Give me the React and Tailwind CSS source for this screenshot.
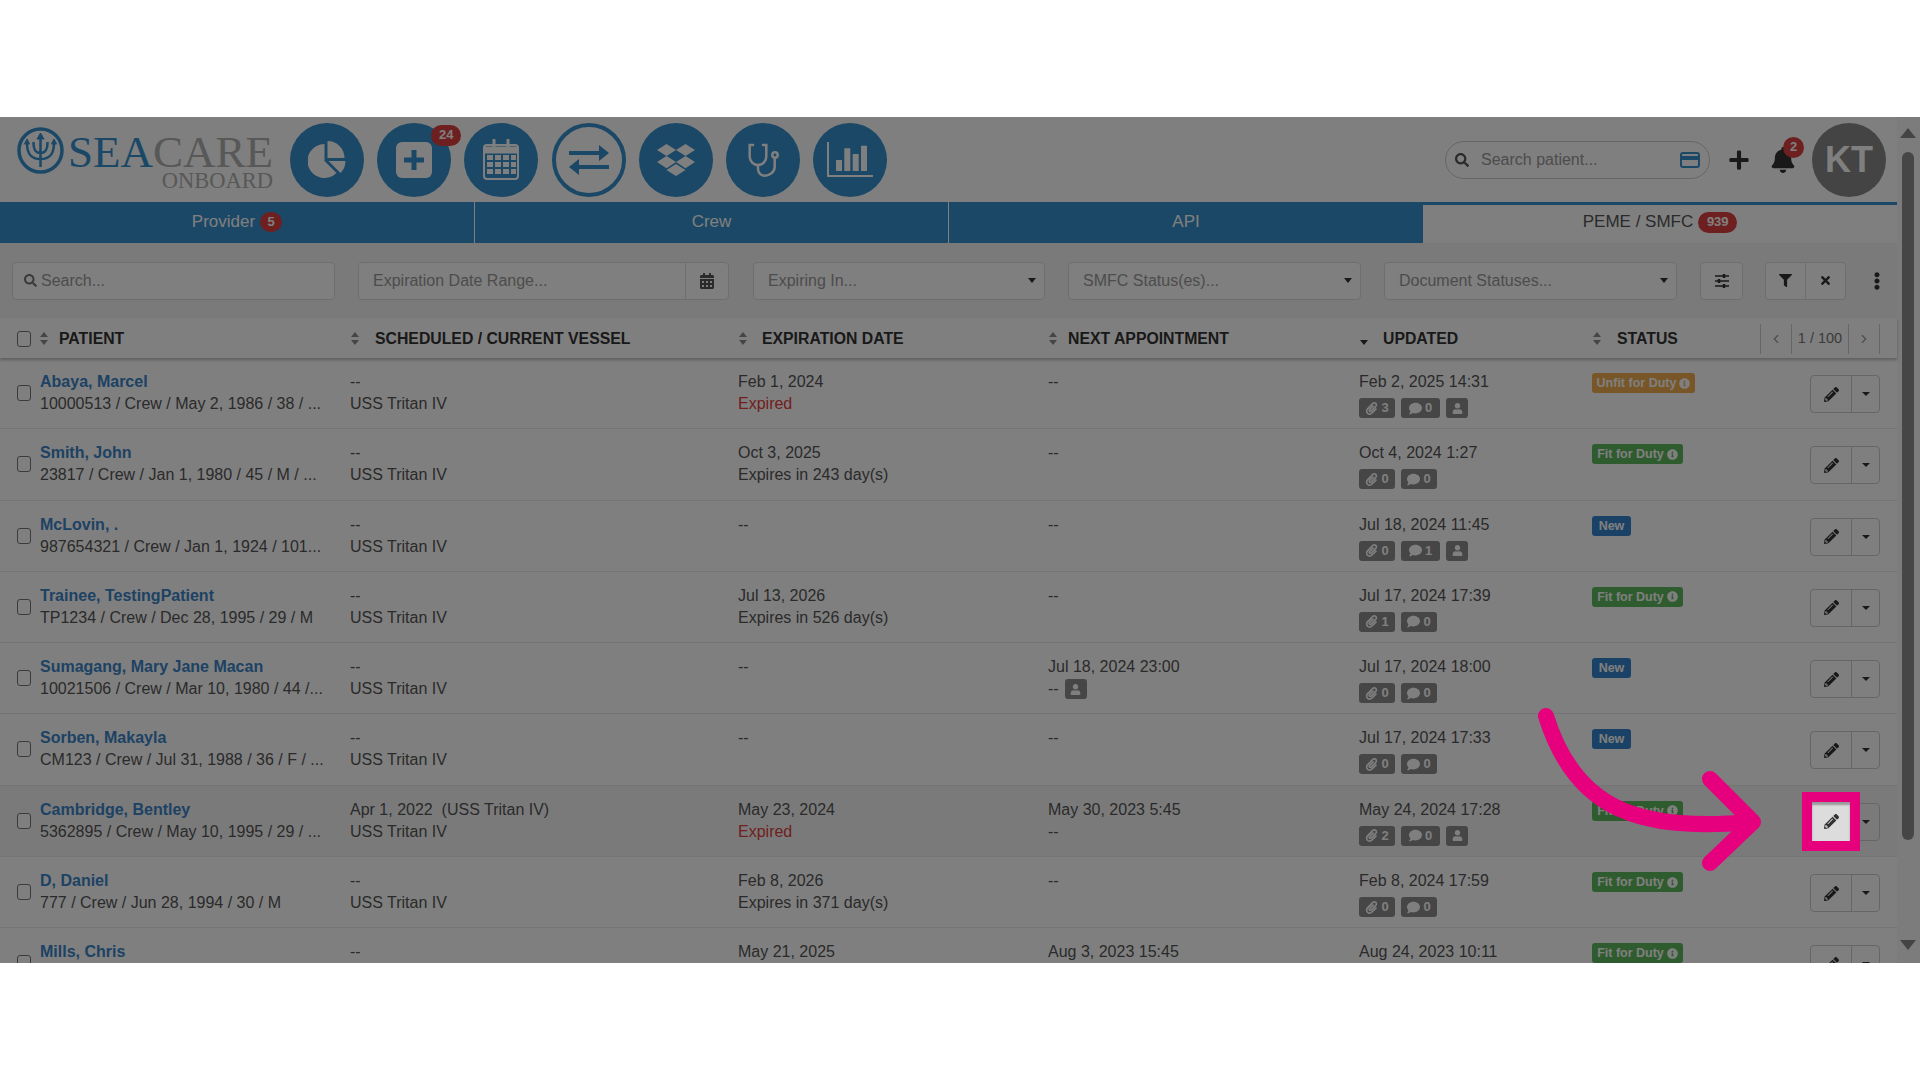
import { ChevronLeft, ChevronRight } from "lucide-react";
import {
	FaBell,
	FaCalendarAlt,
	FaComment,
	FaDropbox,
	FaEllipsisV,
	FaFilter,
	FaInfoCircle,
	FaPaperclip,
	FaPencilAlt,
	FaPlus,
	FaSearch,
	FaTimes,
	FaUser,
} from "react-icons/fa";

const rows = [
	{ name: "Abaya, Marcel", info: "10000513 / Crew / May 2, 1986 / 38 / ...", v1: "--", exp: "Feb 1, 2024", exp2: "Expired", expired: true, next: "--", updated: "Feb 2, 2025 14:31", clips: 3, comments: 0, user: true, status: "unfit" },
	{ name: "Smith, John", info: "23817 / Crew / Jan 1, 1980 / 45 / M / ...", v1: "--", exp: "Oct 3, 2025", exp2: "Expires in 243 day(s)", next: "--", updated: "Oct 4, 2024 1:27", clips: 0, comments: 0, status: "fit" },
	{ name: "McLovin, .", info: "987654321 / Crew / Jan 1, 1924 / 101...", v1: "--", exp: "--", next: "--", updated: "Jul 18, 2024 11:45", clips: 0, comments: 1, user: true, status: "new" },
	{ name: "Trainee, TestingPatient", info: "TP1234 / Crew / Dec 28, 1995 / 29 / M", v1: "--", exp: "Jul 13, 2026", exp2: "Expires in 526 day(s)", next: "--", updated: "Jul 17, 2024 17:39", clips: 1, comments: 0, status: "fit" },
	{ name: "Sumagang, Mary Jane Macan", info: "10021506 / Crew / Mar 10, 1980 / 44 /...", v1: "--", exp: "--", next: "Jul 18, 2024 23:00", nextUser: true, updated: "Jul 17, 2024 18:00", clips: 0, comments: 0, status: "new" },
	{ name: "Sorben, Makayla", info: "CM123 / Crew / Jul 31, 1988 / 36 / F / ...", v1: "--", exp: "--", next: "--", updated: "Jul 17, 2024 17:33", clips: 0, comments: 0, status: "new" },
	{ name: "Cambridge, Bentley", info: "5362895 / Crew / May 10, 1995 / 29 / ...", v1: "Apr 1, 2022\u00a0\u00a0(USS Tritan IV)", exp: "May 23, 2024", exp2: "Expired", expired: true, next: "May 30, 2023 5:45", next2: "--", updated: "May 24, 2024 17:28", clips: 2, comments: 0, user: true, status: "fit", hover: true },
	{ name: "D, Daniel", info: "777 / Crew / Jun 28, 1994 / 30 / M", v1: "--", exp: "Feb 8, 2026", exp2: "Expires in 371 day(s)", next: "--", updated: "Feb 8, 2024 17:59", clips: 0, comments: 0, status: "fit" },
	{ name: "Mills, Chris", info: "", v1: "--", exp: "May 21, 2025", next: "Aug 3, 2023 15:45", updated: "Aug 24, 2023 10:11", clips: 0, comments: 0, status: "fit" },
];

function Sort({ down }) {
	return (
		<svg width="10" height="16" viewBox="0 0 10 16" className="shrink-0">
			{!down && <path d="M5 1 9 6H1z" fill="#8a8a8a" />}
			<path d="M5 14 9 9H1z" fill={down ? "#333" : "#8a8a8a"} />
		</svg>
	);
}

function Check() {
	return <span className="block w-[14px] h-[16px] shrink-0 rounded-[3px] border border-[#777] bg-white" />;
}

function CircleBtn({ children, outline }) {
	return (
		<div
			className={`relative w-[74px] h-[74px] rounded-full flex items-center justify-center shrink-0 ${
				outline ? "border-[4px] border-[#3590cc] bg-white text-[#3590cc]" : "bg-[#3590cc] text-white"
			}`}
		>
			{children}
		</div>
	);
}

function Select({ label, className }) {
	return (
		<div className={`h-[38px] bg-white border border-[#ddd] rounded-[4px] flex items-center justify-between pl-[14px] pr-[8px] text-[16px] text-[#999] ${className}`}>
			{label}
			<span className="w-0 h-0 border-x-[4px] border-x-transparent border-t-[5px] border-t-[#333]" />
		</div>
	);
}

function Status({ type }) {
	if (type === "new") {
		return <span className="inline-flex w-[39px] h-[20px] items-center justify-center rounded-[3px] bg-[#3584cc] text-white text-[12.5px] font-bold">New</span>;
	}
	const unfit = type === "unfit";
	return (
		<span className={`inline-flex h-[20px] items-center justify-center gap-[3px] rounded-[3px] text-white text-[12.5px] font-bold ${unfit ? "w-[103px] bg-[#f0ad4e]" : "w-[91px] bg-[#5cb85c]"}`}>
			{unfit ? "Unfit for Duty" : "Fit for Duty"}
			<FaInfoCircle className="w-[11px] h-[11px]" />
		</span>
	);
}

function Tag({ children, className }) {
	return <span className={`inline-flex h-[20px] items-center justify-center gap-[3px] rounded-[3px] bg-[#8c8c8c] text-white text-[13px] font-bold ${className}`}>{children}</span>;
}

function Row({ row }) {
	return (
		<div className={`grid grid-cols-[350px_388px_310px_311px_233px_218px_1fr] h-[71.3px] pt-[13px] border-b border-[#e8e8e8] text-[16px] leading-[22px] text-[#555] shrink-0 ${row.hover ? "bg-[#f5f5f5]" : ""}`}>
			<div className="flex pl-[17px] gap-[9px]">
				<div className="pt-[14px]">
					<Check />
				</div>
				<div className="whitespace-nowrap">
					<div className="font-bold text-[#3a84c8]">{row.name}</div>
					<div>{row.info}</div>
				</div>
			</div>
			<div>
				<div>{row.v1}</div>
				<div>USS Tritan IV</div>
			</div>
			<div>
				<div>{row.exp}</div>
				{row.exp2 && <div className={row.expired ? "text-[#e04040]" : ""}>{row.exp2}</div>}
			</div>
			<div>
				<div>{row.next}</div>
				{row.next2 && <div>{row.next2}</div>}
				{row.nextUser && (
					<div className="flex items-center gap-[6px]">
						--
						<Tag className="w-[22px]">
							<FaUser className="w-[11px] h-[11px]" />
						</Tag>
					</div>
				)}
			</div>
			<div>
				<div>{row.updated}</div>
				<div className="flex gap-[6px] mt-[5px]">
					<Tag className="w-[36px]">
						<FaPaperclip className="w-[13px] h-[13px]" />
						{row.clips}
					</Tag>
					<Tag className={row.user ? "w-[39px]" : "w-[36px]"}>
						<FaComment className="w-[13px] h-[13px]" />
						{row.comments}
					</Tag>
					{row.user && (
						<Tag className="w-[22px]">
							<FaUser className="w-[11px] h-[11px]" />
						</Tag>
					)}
				</div>
			</div>
			<div>
				<Status type={row.status} />
			</div>
			<div className="flex pt-[4px]">
				<div className="w-[70px] h-[38px] flex border border-[#ccc] rounded-[4px] text-[#333]">
					<div className="w-[41px] border-r border-[#ccc] flex items-center justify-center">
						<FaPencilAlt className="w-[15px] h-[15px]" />
					</div>
					<div className="flex-1 flex items-center justify-center">
						<span className="w-0 h-0 border-x-[4px] border-x-transparent border-t-[4px] border-t-[#333]" />
					</div>
				</div>
			</div>
		</div>
	);
}

export default function App() {
	return (
		<div className="min-h-screen bg-white pt-[117px] font-['Liberation_Sans',Arial,sans-serif]">
			<div className="relative h-[846px] overflow-hidden bg-white flex">
				<div className="w-[1897px] flex flex-col shrink-0">
					{/* top bar */}
					<div className="h-[85px] flex items-center pl-[17px] pr-[11px] shrink-0">
						<div className="w-[273px] flex items-center shrink-0 mt-[2px]">
							<svg width="47" height="47" viewBox="0 0 47 47" fill="none" stroke="#3590cc" className="shrink-0 -mt-[20px]">
								<circle cx="23.5" cy="23.5" r="21.5" strokeWidth="3.5" />
								<path d="M23.5 8v32M10 16c0 12 5 16 13.500 16S37 28 37 16M16.500 15c0 8 2 11 7 11s7-3 7-11" strokeWidth="2.500" />
								<path d="M23.500 6l-3.500 6h7zM10 12l-2.500 5h5zM37 12l-2.500 5h5z" fill="#3590cc" strokeWidth="1" />
							</svg>
							<div className="ml-[4px] flex flex-col items-end font-['Liberation_Serif',serif] text-[#b0b0b0]">
								<div className="mt-[3px] text-[45px] leading-[36px] whitespace-nowrap">
									<span className="text-[#3590cc]">SEA</span>CARE
								</div>
								<div className="text-[22.5px] leading-[21px] whitespace-nowrap">ONBOARD</div>
							</div>
						</div>
						<div className="flex gap-[13.2px] items-center">
							<CircleBtn>
								<svg width="38" height="40" viewBox="0 -2 38 40" fill="currentColor">
									<path d="M16.500 2A17 17 0 1 0 28.500 31L16.500 19z" />
									<path d="M19.500-1A17 17 0 0 1 36.500 16H19.500z" />
									<path d="M20.500 19h17a17 17 0 0 1-5 12z" />
								</svg>
							</CircleBtn>
							<CircleBtn>
								<svg width="36" height="36" viewBox="0 0 36 36">
									<rect width="36" height="36" rx="6" fill="currentColor" />
									<path d="M18 8v20M8 18h20" stroke="#3590cc" strokeWidth="5" />
								</svg>
								<span className="absolute top-[2px] right-[-10px] w-[30px] h-[21px] rounded-full bg-[#dc4040] text-white text-[13px] font-bold flex items-center justify-center">24</span>
							</CircleBtn>
							<CircleBtn>
								<svg width="38" height="42" viewBox="0 0 38 42" fill="none" stroke="currentColor">
									<rect x="2" y="6" width="34" height="34" rx="3" strokeWidth="2" />
									<path d="M2 8h34v6H2z" fill="currentColor" />
									<path d="M12 1v9M26 1v9" strokeWidth="3" strokeLinecap="round" />
									<path d="M5 16h6v5H5zM13 16h6v5h-6zM21 16h6v5h-6zM29 16h5v5h-5zM5 23h6v5H5zM13 23h6v5h-6zM21 23h6v5h-6zM29 23h5v5h-5zM5 30h6v5H5zM13 30h6v5h-6zM21 30h6v5h-6zM29 30h5v5h-5z" fill="currentColor" stroke="none" />
								</svg>
							</CircleBtn>
							<CircleBtn outline>
								<svg width="40" height="30" viewBox="0 0 40 30" fill="currentColor">
									<path d="M0 6h30V0l10 8-10 8v-6H0zM40 20H10v-6L0 22l10 8v-6h30z" />
								</svg>
							</CircleBtn>
							<CircleBtn>
								<FaDropbox className="w-[38px] h-[38px]" />
							</CircleBtn>
							<CircleBtn>
								<svg width="36" height="36" viewBox="0 0 36 36" fill="none" stroke="currentColor" strokeWidth="2.500" strokeLinecap="round">
									<path d="M8 3H4.700V14.700a8.300 8.300 0 0 0 16.600 0V3H18" />
									<path d="M13 23v4c0 4 3 6.700 6.700 6.700s10-3 10-9V16" />
									<circle cx="30" cy="13" r="2.700" />
								</svg>
							</CircleBtn>
							<CircleBtn>
								<svg width="46" height="36" viewBox="0 0 46 36" fill="none" stroke="currentColor">
									<path d="M1 0v34h45" strokeWidth="2" />
									<path d="M9 18h6v11H9zM17.300 6.300h6V29h-6zM25.700 12h6v17h-6zM34 3.700h6V29h-6z" fill="currentColor" stroke="none" />
								</svg>
							</CircleBtn>
						</div>
						<div className="ml-auto flex items-center">
							<div className="w-[265px] h-[38px] rounded-full border border-[#ccc] flex items-center px-[9px] text-[16px] text-[#999]">
								<FaSearch className="w-[14px] h-[14px] text-[#555]" />
								<span className="ml-[12px]">Search patient...</span>
								<svg width="20" height="16" viewBox="0 0 20 16" className="ml-auto">
									<rect x="1" y="1" width="18" height="14" rx="2" fill="none" stroke="#3590cc" strokeWidth="2" />
									<rect x="1" y="4" width="18" height="4" fill="#3590cc" />
								</svg>
							</div>
							<FaPlus className="ml-[18px] w-[22px] h-[22px] text-[#333]" />
							<div className="relative ml-[20px]">
								<FaBell className="w-[26px] h-[26px] text-[#333]" />
								<span className="absolute -top-[10px] left-[13px] w-[21px] h-[21px] rounded-full bg-[#dc4040] text-white text-[13px] font-bold flex items-center justify-center">2</span>
							</div>
							<div className="ml-[16px] w-[74px] h-[74px] rounded-full bg-[#888] text-white text-[36px] font-bold flex items-center justify-center">KT</div>
						</div>
					</div>
					{/* tabs */}
					<div className="h-[41px] grid grid-cols-[475px_474px_474px_1fr] bg-[#3590cc] text-white text-[17px] shrink-0">
						<div className="flex items-center justify-center gap-[5px] border-r border-white pb-[2px]">
							Provider
							<span className="w-[22px] h-[20px] rounded-full bg-[#dc4040] text-[13px] font-bold flex items-center justify-center">5</span>
						</div>
						<div className="flex items-center justify-center border-r border-white pb-[2px]">Crew</div>
						<div className="flex items-center justify-center pb-[2px]">API</div>
						<div className="mt-[3px] pb-[4px] bg-white text-[#555] flex items-center justify-center gap-[5px]">
							PEME / SMFC
							<span className="w-[39px] h-[21px] rounded-full bg-[#dc4040] text-white text-[13px] font-bold flex items-center justify-center">939</span>
						</div>
					</div>
					{/* filters */}
					<div className="h-[75px] bg-[#f5f5f5] flex items-center pl-[12px] shrink-0">
						<div className="w-[323px] h-[38px] bg-white border border-[#ddd] rounded-[4px] flex items-center pl-[11px] text-[16px] text-[#999]">
							<FaSearch className="w-[13px] h-[13px] mr-[4px] text-[#777]" />
							Search...
						</div>
						<div className="ml-[23px] w-[371px] h-[38px] bg-white border border-[#ddd] rounded-[4px] flex items-center text-[16px] text-[#999]">
							<span className="flex-1 pl-[14px]">Expiration Date Range...</span>
							<span className="w-[43px] h-full border-l border-[#ddd] flex items-center justify-center">
								<FaCalendarAlt className="w-[14px] h-[16px] text-[#555]" />
							</span>
						</div>
						<Select label="Expiring In..." className="ml-[24px] w-[292px]" />
						<Select label="SMFC Status(es)..." className="ml-[23px] w-[293px]" />
						<Select label="Document Statuses..." className="ml-[23px] w-[293px]" />
						<div className="ml-[23px] w-[43px] h-[38px] bg-white border border-[#ddd] rounded-[4px] flex items-center justify-center">
							<svg width="14" height="16" viewBox="0 0 14 16" stroke="#333" strokeWidth="1.500">
								<path d="M0 3h14M0 8h14M0 13h14" />
								<path d="M9 1v4M4 6v4M9 11v4" strokeWidth="2.500" />
							</svg>
						</div>
						<div className="ml-[22px] w-[81px] h-[38px] bg-white border border-[#ddd] rounded-[4px] flex">
							<span className="w-[40px] border-r border-[#ddd] flex items-center justify-center">
								<FaFilter className="w-[13px] h-[13px] text-[#333]" />
							</span>
							<span className="flex-1 flex items-center justify-center">
								<FaTimes className="w-[13px] h-[13px] text-[#333]" />
							</span>
						</div>
						<FaEllipsisV className="ml-[23px] w-[16px] h-[18px] text-[#333]" />
					</div>
					{/* table head */}
					<div className="relative grid grid-cols-[350px_388px_310px_311px_233px_168px_1fr] h-[40px] items-center shadow-[0_2px_3px_#bbb] pt-[2px] text-[15.8px] font-bold text-[#333] uppercase shrink-0">
						<div className="flex items-center pl-[17px]">
							<Check />
							<span className="ml-[8px]"><Sort /></span>
							<span className="ml-[10px]">Patient</span>
						</div>
						<div className="flex items-center gap-[15px]"><Sort />Scheduled / Current Vessel</div>
						<div className="flex items-center gap-[14px]"><Sort />Expiration Date</div>
						<div className="flex items-center gap-[10px]"><Sort />Next Appointment</div>
						<div className="flex items-center gap-[14px]"><Sort down />Updated</div>
						<div className="flex items-center gap-[15px]"><Sort />Status</div>
						<div className="flex w-[120px] h-[30px] font-normal normal-case text-[14.5px] text-[#999] border-r border-[#ccc]">
							<span className="w-[32px] border-x border-[#ccc] flex items-center justify-center"><ChevronLeft className="w-[14px] h-[14px]" /></span>
							<span className="w-[56px] flex items-center justify-center text-[#777]">1 / 100</span>
							<span className="flex-1 border-l border-[#ccc] flex items-center justify-center"><ChevronRight className="w-[14px] h-[14px]" /></span>
						</div>
					</div>
					{rows.map(row => (
						<Row key={row.name} row={row} />
					))}
				</div>
				{/* scrollbar */}
				<div className="flex-1 bg-[#f8f8f8] flex flex-col items-center pt-[11px] pr-[2px]">
					<span className="w-0 h-0 border-x-[8px] border-x-transparent border-b-[10px] border-b-[#888]" />
					<span className="mt-[14px] w-[12px] h-[688px] rounded-full bg-[#8c8c8c]" />
					<span className="mt-[100px] w-0 h-0 border-x-[8px] border-x-transparent border-t-[10px] border-t-[#888]" />
				</div>
				{/* page dimming and the callout on top of it */}
				<div className="absolute inset-0 bg-black/50" />
				<div className="absolute left-[1802px] top-[675px] w-[58px] h-[59px] border-[10px] border-[#e6007e] bg-[#dcdcdc] shadow-[inset_0_3px_2px_#999] flex items-center justify-center text-[#333]">
					<FaPencilAlt className="w-[15px] h-[15px]" />
				</div>
				<svg className="absolute left-0 top-0" width="1897" height="846" fill="none" stroke="#e6007e" strokeWidth="16" strokeLinecap="round" strokeLinejoin="round">
					<path d="M1546 599C1575 693 1640 715 1750 705M1710 662 1753 705 1710 746" />
				</svg>
			</div>
		</div>
	);
}
